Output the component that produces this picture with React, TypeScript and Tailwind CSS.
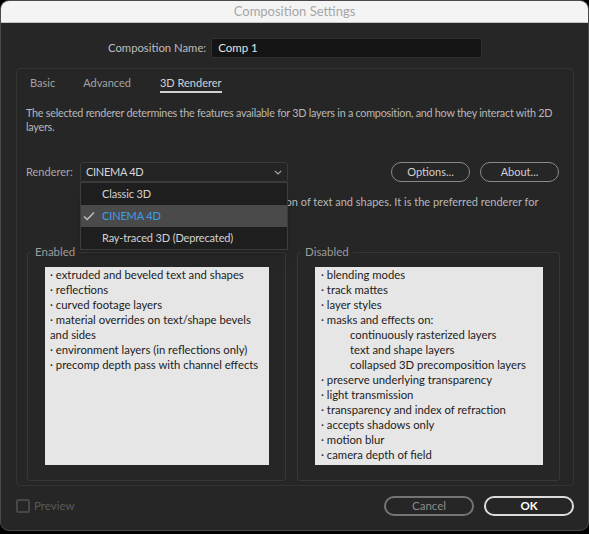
import React from "react";

// Composition Settings dialog, 3D Renderer tab with the renderer menu open

const FONT = { fontFamily: "Lato, 'Noto Sans', sans-serif" };

const enabledItems: { text: string; bullet: boolean }[] = [
  { text: "extruded and beveled text and shapes", bullet: true },
  { text: "reflections", bullet: true },
  { text: "curved footage layers", bullet: true },
  { text: "material overrides on text/shape bevels", bullet: true },
  { text: "and sides", bullet: false },
  { text: "environment layers (in reflections only)", bullet: true },
  { text: "precomp depth pass with channel effects", bullet: true },
];

const disabledItems: { text: string; indent?: boolean }[] = [
  { text: "blending modes" },
  { text: "track mattes" },
  { text: "layer styles" },
  { text: "masks and effects on:" },
  { text: "continuously rasterized layers", indent: true },
  { text: "text and shape layers", indent: true },
  { text: "collapsed 3D precomposition layers", indent: true },
  { text: "preserve underlying transparency" },
  { text: "light transmission" },
  { text: "transparency and index of refraction" },
  { text: "accepts shadows only" },
  { text: "motion blur" },
  { text: "camera depth of field" },
];

const rendererOptions = ["Classic 3D", "CINEMA 4D", "Ray-traced 3D (Deprecated)"];

const Check = () => (
  <svg width="12" height="10" viewBox="0 0 12 10" fill="none">
    <path d="M1 5.5 L4.2 8.5 L11 1.5" stroke="#bdbdbd" strokeWidth="1.6" />
  </svg>
);

const Chevron = () => (
  <svg width="8" height="5" viewBox="0 0 8 5" fill="none">
    <path d="M0.8 0.8 L4 4 L7.2 0.8" stroke="#a8a8a8" strokeWidth="1.2" />
  </svg>
);

const GroupBox: React.FC<{ label: string; className: string; children: React.ReactNode }> = ({
  label,
  className,
  children,
}) => (
  <div className={`relative h-[229px] border border-[#373737] rounded-[3px] pt-[14px] pl-[17px] ${className}`}>
    <span className="absolute left-[3px] -top-[9px] bg-[#262626] px-[4px] text-[11.5px] leading-[16px] text-[#9c9c9c]">
      {label}
    </span>
    {children}
  </div>
);

const App: React.FC = () => {
  const selected = "CINEMA 4D";

  return (
    <div className="w-[589px] h-[534px] bg-black overflow-hidden" style={FONT}>
      <div className="h-[531px] rounded-[9px] border border-[#4a4a4a] bg-[#262626] overflow-hidden flex flex-col">
        {/* title bar */}
        <div className="h-[22px] shrink-0 bg-[#f4f4f4] border-b border-[#c4c4c4] text-center text-[13px] leading-[21px] text-[#a6a6a6]">
          Composition Settings
        </div>

        {/* composition name */}
        <div className="flex items-center mt-[15px] pl-[107px]">
          <span className="text-[11.3px] text-[#bdbdbd]">Composition Name:</span>
          <div className="ml-[5px] w-[271px] h-[20px] bg-[#141414] border border-[#303030] rounded-[3px] px-[6px] text-[11.5px] leading-[18px] text-[#e2e2e2]">
            Comp 1
          </div>
        </div>

        {/* tab panel */}
        <div className="ml-[15px] mr-[14px] mt-[10px] h-[418px] shrink-0 border border-[#343434] rounded-[4px] px-[9px]">
          <div className="flex pt-[6px] pl-[4px] text-[11px] leading-[16px]">
            <span className="text-[#a3a3a3] h-[18px]">Basic</span>
            <span className="ml-[28px] text-[#a3a3a3] h-[18px]">Advanced</span>
            <span className="ml-[29px] text-[#d2d2d2] h-[18px] border-b-2 border-[#d2d2d2]">3D Renderer</span>
          </div>

          <p className="mt-[13px] text-[10.8px] tracking-[-0.25px] leading-[14px] text-[#b8b8b8] whitespace-nowrap">
            The selected renderer determines the features available for 3D layers in a composition, and how they interact with 2D
            <br />
            layers.
          </p>

          {/* renderer row */}
          <div className="flex items-center mt-[28px] h-[20px]">
            <span className="w-[54px] text-[11px] text-[#a8a8a8]">Renderer:</span>
            <div className="relative">
              <div className="w-[208px] h-[20px] border border-[#3a3a3a] rounded-[3px] bg-[#242424] flex items-center justify-between pl-[5px] pr-[5px] text-[11px] tracking-[-0.3px] text-[#d6d6d6]">
                <span>CINEMA 4D</span>
                <Chevron />
              </div>
              <div className="absolute left-0 top-[20px] w-[208px] z-10 bg-[#1e1e1e] border border-[#3c3c3c] shadow-lg">
                {rendererOptions.map((opt) => {
                  const isSel = opt === selected;
                  return (
                    <div
                      key={opt}
                      className={`h-[22px] flex items-center text-[11px] tracking-[-0.15px] ${isSel ? "bg-[#4a4a4a] text-[#3d9de6]" : "text-[#d2d2d2]"}`}
                    >
                      <span className="w-[21px] flex justify-start pl-[2px]">{isSel && <Check />}</span>
                      <span>{opt}</span>
                    </div>
                  );
                })}
              </div>
            </div>
            <div className="ml-[103px] flex gap-[10px]">
              <button className="w-[79px] h-[20px] rounded-full border-[1.5px] border-[#8a8a8a] text-[11px] leading-[16px] text-[#d0d0d0]">
                Options...
              </button>
              <button className="w-[79px] h-[20px] rounded-full border-[1.5px] border-[#8a8a8a] text-[11px] leading-[16px] text-[#d0d0d0]">
                About...
              </button>
            </div>
          </div>

          <p className="mt-[13px] ml-[54px] text-[11px] leading-[14px] text-[#b8b8b8] whitespace-nowrap">
            The CINEMA 4D renderer supports extrusion of text and shapes. It is the preferred renderer for
            <br />
            most compositions.
          </p>

          {/* enabled / disabled */}
          <div className="flex mt-[29px] ml-[1px] gap-[11px]">
            <GroupBox label="Enabled" className="w-[259px]">
              <div className="w-[224px] h-[198px] bg-[#e6e6e6] pl-[5px] text-[11.3px] leading-[15px] text-[#1c1c1c]">
                {enabledItems.map((it, i) => (
                  <div key={i} className="whitespace-nowrap">
                    {it.bullet ? "· " : ""}
                    {it.text}
                  </div>
                ))}
              </div>
            </GroupBox>
            <GroupBox label="Disabled" className="w-[263px]">
              <div className="w-[228px] h-[198px] bg-[#e6e6e6] pl-[6px] text-[11.3px] leading-[15px] text-[#1c1c1c]">
                {disabledItems.map((it, i) => (
                  <div key={i} className={`whitespace-nowrap ${it.indent ? "pl-[29px]" : ""}`}>
                    {it.indent ? "" : "· "}
                    {it.text}
                  </div>
                ))}
              </div>
            </GroupBox>
          </div>
        </div>

        {/* footer */}
        <div className="flex items-center justify-between mt-[10px] pl-[15px] pr-[14px]">
          <label className="flex items-center gap-[4px]">
            <span className="w-[14px] h-[14px] border-2 border-[#474747] rounded-[2px]" />
            <span className="text-[11.5px] text-[#5a5a5a]">Preview</span>
          </label>
          <div className="flex gap-[10px]">
            <button className="w-[90px] h-[20px] rounded-full border-2 border-[#747474] text-[11.5px] leading-[16px] text-[#8c8c8c]">
              Cancel
            </button>
            <button className="w-[90px] h-[20px] rounded-full border-2 border-[#dcdcdc] text-[11.5px] leading-[16px] font-bold text-white">
              OK
            </button>
          </div>
        </div>
      </div>
    </div>
  );
};

export default App;
